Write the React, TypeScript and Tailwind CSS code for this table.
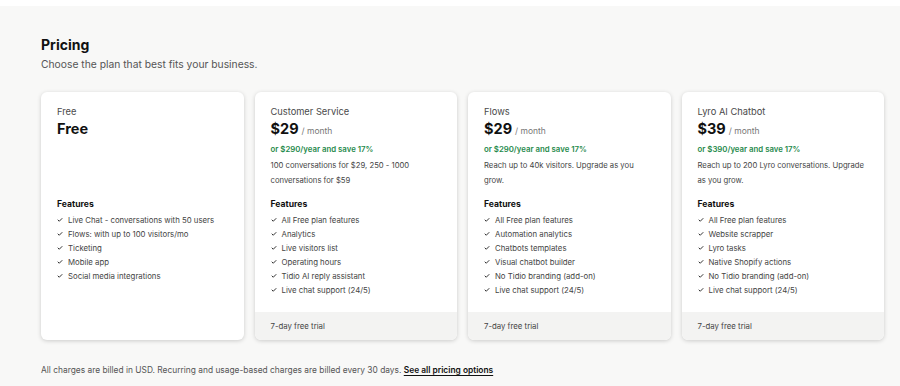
import { Check } from "lucide-react";

type Plan = {
  label: string;
  price: string;
  per?: string;
  yearly?: string;
  desc?: string;
  features: string[];
  trial?: boolean;
};

const plans: Plan[] = [
  {
    label: "Free",
    price: "Free",
    features: [
      "Live Chat - conversations with 50 users",
      "Flows: with up to 100 visitors/mo",
      "Ticketing",
      "Mobile app",
      "Social media integrations",
    ],
  },
  {
    label: "Customer Service",
    price: "$29",
    per: "/ month",
    yearly: "or $290/year and save 17%",
    desc: "100 conversations for $29, 250 - 1000 conversations for $59",
    features: [
      "All Free plan features",
      "Analytics",
      "Live visitors list",
      "Operating hours",
      "Tidio AI reply assistant",
      "Live chat support (24/5)",
    ],
    trial: true,
  },
  {
    label: "Flows",
    price: "$29",
    per: "/ month",
    yearly: "or $290/year and save 17%",
    desc: "Reach up to 40k visitors. Upgrade as you grow.",
    features: [
      "All Free plan features",
      "Automation analytics",
      "Chatbots templates",
      "Visual chatbot builder",
      "No Tidio branding (add-on)",
      "Live chat support (24/5)",
    ],
    trial: true,
  },
  {
    label: "Lyro AI Chatbot",
    price: "$39",
    per: "/ month",
    yearly: "or $390/year and save 17%",
    desc: "Reach up to 200 Lyro conversations. Upgrade as you grow.",
    features: [
      "All Free plan features",
      "Website scrapper",
      "Lyro tasks",
      "Native Shopify actions",
      "No Tidio branding (add-on)",
      "Live chat support (24/5)",
    ],
    trial: true,
  },
];

const PlanCard = ({ plan }: { plan: Plan }) => (
  <div className="flex flex-col bg-white rounded-md shadow-[0_1px_4px_rgba(0,0,0,0.18)] overflow-hidden">
    <div className="flex-1 px-4 pt-[14px]">
      <div className="text-[9.3px] leading-[12px] text-[#4a4a4a]">{plan.label}</div>
      <div className="flex items-baseline gap-[3px] mt-px h-[20px]">
        <span className="text-[14.5px] font-bold text-[#111] leading-[20px]">{plan.price}</span>
        {plan.per && <span className="text-[8.5px] text-[#777]">{plan.per}</span>}
      </div>
      <div className="h-[58px] pt-[4px]">
        {plan.yearly && (
          <div className="text-[7.8px] font-semibold text-[#1f8a4c] leading-[12px]">{plan.yearly}</div>
        )}
        {plan.desc && (
          <div className="text-[7.7px] text-[#444] mt-[3px] leading-[15px]">{plan.desc}</div>
        )}
      </div>
      <div className="text-[8.6px] font-bold text-[#111] leading-[14px]">Features</div>
      <ul className="mt-[2px]">
        {plan.features.map((f) => (
          <li key={f} className="flex items-center gap-[5px] text-[7.8px] text-[#444] leading-[14px] whitespace-nowrap">
            <Check size={6} strokeWidth={4} className="text-[#333] shrink-0" />
            {f}
          </li>
        ))}
      </ul>
    </div>
    {plan.trial ? (
      <div className="bg-[#f3f3f2] h-[28px] px-4 pt-px flex items-center text-[7.8px] text-[#444]">
        7-day free trial
      </div>
    ) : (
      <div className="h-[28px]" />
    )}
  </div>
);

export default function App() {
  return (
    <div className="w-[900px] h-[386px] bg-white font-['Inter',sans-serif] overflow-hidden">
      <div className="mt-[6px] h-[380px] bg-[#f8f8f7] px-[41px] pt-[30px]">
        <h1 className="text-[14px] font-bold text-[#111] leading-[18px]">Pricing</h1>
        <p className="text-[10.3px] text-[#555] mt-[3px] leading-[14px]">
          Choose the plan that best fits your business.
        </p>
        <div className="grid grid-cols-4 gap-[11px] mt-[21px] h-[248px] w-[843px]">
          {plans.map((p) => (
            <PlanCard key={p.label} plan={p} />
          ))}
        </div>
        <p className="mt-[24px] text-[8.4px] text-[#555] leading-[12px]">
          All charges are billed in USD. Recurring and usage-based charges are billed every 30 days.{" "}
          <a className="font-semibold text-[#111] underline underline-offset-2">See all pricing options</a>
        </p>
      </div>
    </div>
  );
}
